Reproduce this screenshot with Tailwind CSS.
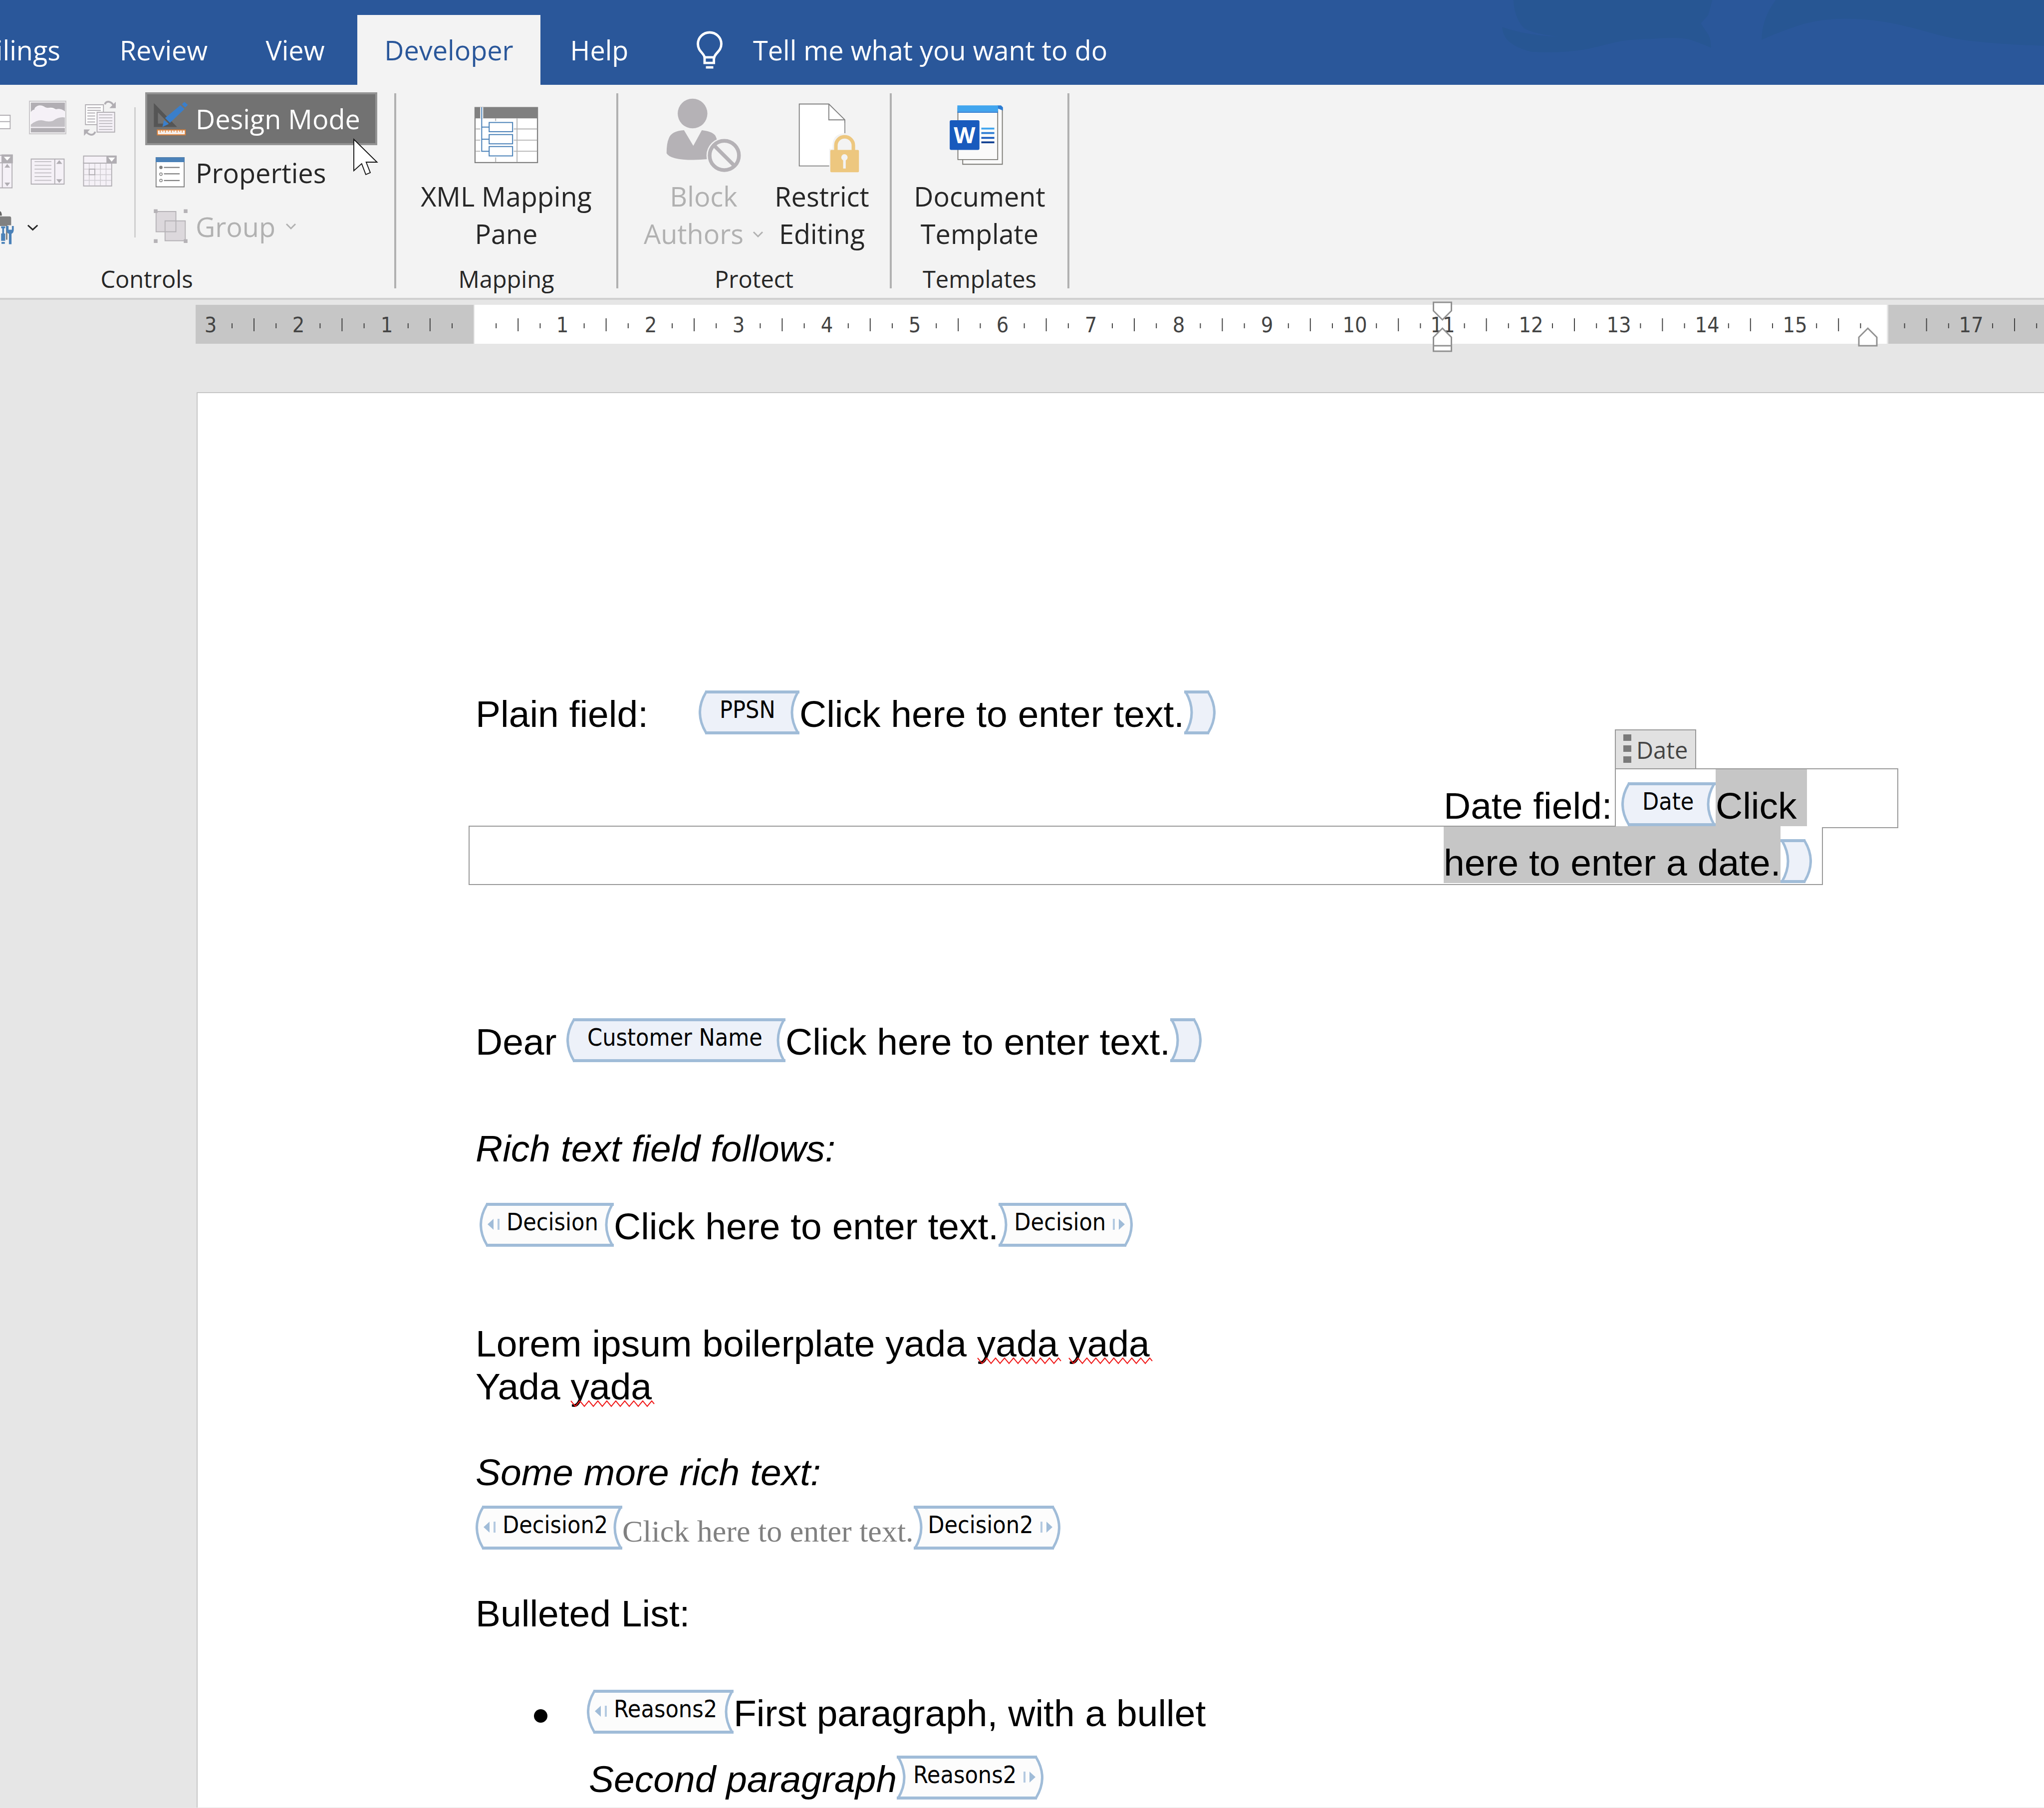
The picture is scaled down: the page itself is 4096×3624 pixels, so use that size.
<!DOCTYPE html>
<html lang="en">
<head>
<meta charset="utf-8">
<title>Word - Developer tab</title>
<script src="https://cdn.jsdelivr.net/npm/@tailwindcss/browser@4"></script>
</head>
<body class="min-h-screen overflow-x-hidden bg-[#e6e6e6] font-['Open_Sans','Noto_Sans',sans-serif] text-[54px] text-[#262626]">

<!-- Shared shapes for the content-control tags -->
<svg class="hidden" aria-hidden="true">
  <symbol id="bulge" viewBox="0 0 16 88"><path d="M16 3H15Q-10 44 15 85H16" fill="currentColor" stroke="#a0bcd8" stroke-width="5"/><path d="M13 3H16M13 85H16" stroke="#a0bcd8" stroke-width="6"/></symbol>
  <symbol id="notch" viewBox="0 0 18 88"><path d="M0 3H15Q-9 44 15 85H0" fill="currentColor" stroke="#a0bcd8" stroke-width="5"/><path d="M0 3H18M0 85H18" stroke="#a0bcd8" stroke-width="6"/></symbol>
  <symbol id="arrow" viewBox="0 0 26 24"><path d="M0 12L12 1V23Z" fill="#a0bcd8"/><path d="M22 1V23" stroke="#b4cae1" stroke-width="4"/></symbol>
  <symbol id="chevron" viewBox="0 0 22 14"><path d="M2 2L11 11L20 2" fill="none" stroke="currentColor" stroke-width="3"/></symbol>
</svg>

<header class="relative flex h-[170px] items-end overflow-hidden bg-[#2a579a] text-white">
  <svg class="absolute top-0 right-0 h-[170px] w-[1409px]" viewBox="3600 0 1887 228" preserveAspectRatio="none" aria-hidden="true">
    <path fill="#275693" d="M4063 0Q4066 50 4092 76Q4120 92 4190 99Q4100 96 4033 73Q4034 120 4111 139Q4190 144 4260 132C4330 118 4340 106 4430 105Q4510 98 4538 107Q4560 114 4593 128Q4594 100 4580 84L4566 63L4586 40L4597 0Z"/>
    <path fill="#275693" d="M4767 0Q4730 50 4729 107Q4780 84 4830 68C4900 46 4990 44 5092 65C5180 84 5200 98 5290 110Q5380 120 5487 123V0Z"/>
  </svg>
  <nav class="relative flex h-[140px] leading-[140px] whitespace-nowrap">
    <a href="#" class="flex w-[183px] justify-end pr-[62px]">Mailings</a>
    <a href="#" class="w-[290px] text-center">Review</a>
    <a href="#" class="w-[243px] pr-[6px] text-center">View</a>
    <a href="#" class="w-[367px] bg-[#f3f3f3] text-center text-[#2a579a]" aria-current="page">Developer</a>
    <a href="#" class="w-[236px] text-center">Help</a>
  </nav>
  <label class="relative ml-[73px] flex h-[140px] items-center gap-[57px]">
    <svg class="h-[82px] w-[60px]" viewBox="1865 80 80 110" fill="none" stroke="#fff" stroke-width="6.5" aria-hidden="true">
      <path d="M1892 158C1892 144 1873.500 140 1873.500 119A31.500 31 0 0 1 1936.500 119C1936.500 140 1917 144 1917 158"/><path d="M1891.500 155V170H1916.500V155Z"/><path d="M1895 182H1915"/>
    </svg>
    <input type="text" aria-label="Tell me what you want to do" placeholder="Tell me what you want to do" class="h-[100px] w-[800px] bg-transparent placeholder:text-white placeholder:opacity-100">
  </label>
</header>

<section class="flex h-[431px] items-start overflow-hidden border-b-4 border-[#d0d0d0] bg-[#f3f3f3]" aria-label="Ribbon">
  <!-- Controls -->
  <div class="relative flex h-[427px] w-[790px] shrink-0 flex-col justify-between pt-[15px] pb-[6px]">
    <div class="flex items-start">
      <div class="grid w-[269px] grid-cols-[43px_105px_105px] gap-y-[2px]">
        <button class="flex h-[106px] items-center" aria-label="Check box control"><svg class="h-[75px] w-[43px]" viewBox="0 269 57 100" fill="#fff" stroke="#b1aeb3" stroke-width="2.500"><path d="M-5 309H27V345H-5ZM-5 326H27"/></svg></button>
        <button class="flex items-center justify-center" aria-label="Picture control"><svg class="size-[75px]" viewBox="78 269 100 100"><path d="M79.500 271.500H176.500V358.500H79.500Z" fill="#fff" stroke="#cbc9cc" stroke-width="3"/><path d="M83 275H174V299Q164 290 150 293Q140 287 132 289Q122 290 119 286Q105 279 97 287Q92 290 93 294Q86 295 83 301Z" fill="#b1aeb3"/><path d="M83 301Q88 294 94 294Q92 287 101 285Q112 282 119 287Q132 291 150 293Q164 290 174 299V343H83Z" fill="#f5f1f7"/><path d="M83 334Q100 320 116 323Q130 328 142 324Q158 312 174 315V340H83Z" fill="#c2bfc4"/><path d="M83 343H174V355H83Z" fill="#b1aeb3"/></svg></button>
        <button class="flex items-center justify-center" aria-label="Building block gallery"><svg class="size-[75px]" viewBox="218 267 100 100" fill="none" stroke="#b1aeb3" stroke-width="2.500"><path d="M229 279H277V332H229Z" fill="#fff"/><path d="M234 287H270M234 294H270M234 301H255M234 309H255M234 317H255M234 325H255" /><path d="M260 299H307V352H260Z" fill="#f5f1f7"/><path d="M265 306H301M265 314H301M265 322H301M265 329H301M265 337H301M265 345H301" stroke-width="2"/><path d="M281 278Q283 270 292 271Q301 273 304 282" stroke-width="5"/><path d="M310 271V288H293Z" fill="#b1aeb3" stroke="none"/><path d="M255 351Q252 360 243 359Q233 356 231 350" stroke-width="5"/><path d="M225 362V345H241Z" fill="#b1aeb3" stroke="none"/></svg></button>
        <button class="flex h-[106px] items-center" aria-label="Combo box control"><svg class="h-[75px] w-[43px]" viewBox="0 414 57 100" fill="#f5f1f7" stroke="#b1aeb3" stroke-width="2.500"><path d="M-5 417H32V437H-5ZM-5 437H32V504H-5ZM6 437V504"/><path d="M5 416H33V437H5Z" fill="#b1aeb3"/><path d="M10 421H28L19 431Z" fill="#fff" stroke="none"/><path d="M12 450H27L19 440ZM12 490H27L19 500Z" fill="#b1aeb3" stroke="none"/></svg></button>
        <button class="flex items-center justify-center" aria-label="Drop-down list control"><svg class="size-[75px]" viewBox="78 414 100 100" fill="#f5f1f7" stroke="#b1aeb3" stroke-width="2.500"><path d="M84 427H172V494H84ZM147 427V494"/><path d="M93 434H138M93 444H138M93 454H138M93 464H138M93 474H138M93 484H138" stroke="#c5c2c7"/><path d="M151 440H167L159 430ZM151 481H167L159 491Z" fill="#b1aeb3" stroke="none"/></svg></button>
        <button class="flex items-center justify-center" aria-label="Date picker control"><svg class="size-[75px]" viewBox="218 414 100 100" fill="#f5f1f7" stroke="#b1aeb3" stroke-width="2.500"><path d="M224 437H299V499H224Z"/><path d="M239 439V498M254 439V498M269 439V498M284 439V498M225 454H298M225 469H298M225 484H298" stroke="#cfccd1" stroke-width="2"/><path d="M239 454H254V469H239Z"/><path d="M224 419H311V438H224Z"/><path d="M285 418H312V439H285Z" fill="#b1aeb3" stroke="none"/><path d="M290 423H308L299 434Z" fill="#fff" stroke="none"/></svg></button>
        <button class="col-span-2 flex h-[106px] items-center" aria-label="Legacy tools"><svg class="h-[75px] w-[82px]" viewBox="0 558 110 100"><path d="M0 566Q5 568 5 578H0Z" fill="#666"/><path d="M0 580H26Q30 580 30 585V604H20V643H16V606H0Z" fill="#808080"/><path d="M3 607H14V612H11V626H14V646H3V626H6V612H3ZM4 649H13V654H4Z" fill="#4a81b8"/><path d="M17 606V616Q17 624 24 627V655H31V627Q37 624 37 616V606H32V616H23V606Z" fill="#4a81b8"/><path d="M75 604L88 616L101 604" fill="none" stroke="#262626" stroke-width="4"/></svg></button>
      </div>
      <div class="mt-[30px] h-[261px] w-[3px] bg-[#d0d0d0]"></div>
      <div class="ml-[19px] flex w-[465px] flex-col gap-[2px]">
        <button class="flex h-[106px] items-center gap-[14px] border-4 border-[#939393] bg-[#727272] pl-[11px] whitespace-nowrap text-white" aria-pressed="true"><svg class="size-[72px]" viewBox="410 267 96 96"><path fill="#555" fill-rule="evenodd" d="M413 273V337H475ZM424 298V328H453Z"/><path fill="#3a7fcb" d="M443 313L484 279L495 289L456 326ZM440 319L453 329L436 337ZM488 276L495 270L504 278L497 285Z"/><path d="M422.500 345H497V358H422.500Z" fill="#f5eeea" stroke="#dd7f35" stroke-width="2.500"/><path d="M430 346V352M437 346V350M444 346V352M452 346V350M460 346V352M467 346V350M475 346V352M482 346V350M489 346V352" stroke="#dd7f35" stroke-width="2"/></svg>Design Mode</button>
        <button class="flex h-[106px] items-center gap-[14px] pl-[15px] whitespace-nowrap"><svg class="size-[72px]" viewBox="410 413 96 96"><path d="M419 421H494V499H419Z" fill="#fff" stroke="#808080" stroke-width="2.500"/><path d="M418 420H495V433H418Z" fill="#4a81b8"/><path d="M440 447H482M440 464H482M440 482H482" stroke="#808080" stroke-width="3"/><circle cx="432" cy="447" r="4.500" fill="#808080"/><circle cx="432" cy="465" r="3.500" fill="none" stroke="#808080" stroke-width="2"/><circle cx="432" cy="482" r="3.500" fill="none" stroke="#808080" stroke-width="2"/></svg>Properties</button>
        <button class="flex h-[106px] items-center gap-[14px] pl-[15px] whitespace-nowrap text-[#b1b1b1]" aria-disabled="true"><svg class="size-[72px]" viewBox="410 558 96 96"><path d="M419 566H472V620H419Z" fill="#dcd8dc"/><path d="M443 591H497V644H443Z" fill="#dcd8dc"/><path d="M419 566H472V620H419ZM443 591H497V644H443Z" fill="none" stroke="#b5b2b6" stroke-width="2.500"/><path d="M413 560H423V570H413ZM493 560H503V570H493ZM413 640H423V650H413ZM493 640H503V650H493Z" fill="#b5b2b6"/></svg>Group<svg class="ml-[6px] h-[14px] w-[22px]"><use href="#chevron"/></svg></button>
      </div>
    </div>
    <div class="w-[588px] text-center text-[47px] leading-[64px]">Controls</div>
    <svg class="absolute top-[107px] left-[706px] h-[75px] w-[54px]" viewBox="946 370 72 100" aria-hidden="true"><path d="M950 373V457L971 438L982 467L994 462L983 434H1012Z" fill="#fff" stroke="#111" stroke-width="2.500"/></svg>
  </div>
  <div class="mt-[17px] h-[391px] w-[4px] shrink-0 bg-[#b1b1b1]"></div>

  <!-- Mapping -->
  <div class="flex h-[427px] w-[441px] shrink-0 flex-col items-center justify-between pt-[27px] pb-[6px]">
    <button class="flex flex-col items-center gap-[10px] leading-[75px]">
      <svg class="size-[149px]" viewBox="1260 264 200 200"><path d="M1276 289H1444V437H1276Z" fill="#fff" stroke="#808080" stroke-width="3"/><path d="M1275 288H1445V318H1275Z" fill="#808080"/><path d="M1290 288H1298V318H1290Z" fill="#fff"/><path d="M1331.500 318V325M1331.500 423V436M1389 318V436M1278 346.500H1290M1278 376.500H1290M1278 406.500H1290M1380 346.500H1443M1380 376.500H1443M1380 406.500H1443" stroke="#b1b1b1" stroke-width="2.500"/><path d="M1294 288V406.500H1314M1294 341.500H1314M1294 374H1314M1314 329H1377V354H1314ZM1314 361.500H1377V386.500H1314ZM1314 394H1377V419H1314Z" fill="none" stroke="#4a81b8" stroke-width="2.700"/></svg>
      <span>XML Mapping<br>Pane</span>
    </button>
    <div class="text-[47px] leading-[64px]">Mapping</div>
  </div>
  <div class="mt-[17px] h-[391px] w-[4px] shrink-0 bg-[#b1b1b1]"></div>

  <!-- Protect -->
  <div class="flex h-[427px] w-[544px] shrink-0 flex-col items-center justify-between pt-[27px] pb-[6px]">
    <div class="flex w-full pl-[32px]">
      <button class="flex w-[278px] flex-col items-center gap-[10px] leading-[75px] text-[#b1b1b1]" aria-disabled="true">
        <svg class="h-[149px] w-[151px]" viewBox="1789 264 203 200"><circle cx="1860" cy="305" r="40" fill="#b5b2b6"/><path d="M1837 350L1862 392L1885 350Q1912 353 1921 364Q1926 372 1928 390L1900 428Q1880 430 1862 430Q1800 430 1790 412Q1790 385 1796 372Q1803 352 1837 350Z" fill="#b5b2b6"/><circle cx="1945.500" cy="418" r="48" fill="#f3f3f3"/><circle cx="1945.500" cy="418" r="39.500" fill="none" stroke="#b5b2b6" stroke-width="10"/><path d="M1918 391L1973 446" stroke="#b5b2b6" stroke-width="10"/></svg>
        <span class="whitespace-nowrap">Block<br>Authors<svg class="mb-[10px] ml-[18px] inline h-[14px] w-[22px]"><use href="#chevron"/></svg></span>
      </button>
      <button class="flex w-[196px] flex-col items-center gap-[10px] leading-[75px]">
        <svg class="size-[149px]" viewBox="2106 264 200 200"><path d="M2144.500 279.500H2224L2267 322V446H2144.500Z" fill="#fff" stroke="#808080" stroke-width="2.500"/><path d="M2224 279V322H2267" fill="none" stroke="#808080" stroke-width="2.500"/><path d="M2225 450V400H2234V388Q2236 359 2266 358Q2297 359 2299 388V400H2310V450Z" fill="#f3f3f3"/><path d="M2224 450V400H2233V388Q2238 359 2266 358V330H2160V440H2224Z" fill="#fff"/><path d="M2243 406V391A23.500 23.500 0 0 1 2290 391V406" fill="none" stroke="#edc77f" stroke-width="9.500"/><rect x="2228" y="403" width="77" height="60" rx="3" fill="#edc77f"/><circle cx="2266" cy="423" r="8.500" fill="#f3f3f3"/><path d="M2266 425V453" stroke="#f3f3f3" stroke-width="7"/></svg>
        <span>Restrict<br>Editing</span>
      </button>
    </div>
    <div class="text-[47px] leading-[64px]">Protect</div>
  </div>
  <div class="mt-[17px] h-[391px] w-[4px] shrink-0 bg-[#b1b1b1]"></div>

  <!-- Templates -->
  <div class="flex h-[427px] w-[352px] shrink-0 flex-col items-center justify-between pt-[27px] pb-[6px]">
    <button class="flex flex-col items-center gap-[10px] leading-[75px]">
      <svg class="size-[149px]" viewBox="2531 264 200 200"><path d="M2585 290H2691.500V441.500H2585Z" fill="#fafafa" stroke="#7a7974" stroke-width="2.500"/><path d="M2678 283H2688L2693 288V297L2680 292Z" fill="#2b7cd3"/><path d="M2572 290H2679V429H2572Z" fill="#fafafa" stroke="#7a7974" stroke-width="2.500"/><path d="M2570.500 283H2680V300H2570.500Z" fill="#41a5ee"/><path d="M2570.500 300H2680V303H2570.500Z" fill="#2b7cd3"/><rect x="2550" y="323" width="80" height="80" rx="4" fill="#185abd"/><text x="2590" y="385" text-anchor="middle" font-size="60" font-weight="700" fill="#fff">W</text><path d="M2635 345.500H2670" stroke="#41a5ee" stroke-width="5"/><path d="M2635 357.500H2670" stroke="#2b7cd3" stroke-width="5"/><path d="M2635 370.500H2670" stroke="#185abd" stroke-width="5"/><path d="M2635 382.500H2670" stroke="#103f91" stroke-width="5"/></svg>
      <span>Document<br>Template</span>
    </button>
    <div class="text-[47px] leading-[64px]">Templates</div>
  </div>
  <div class="mt-[17px] h-[391px] w-[4px] shrink-0 bg-[#b1b1b1]"></div>
</section>

<!-- Horizontal ruler, 176.4px per centimetre -->
<div class="mt-[10px] ml-[392px] h-[78px]">
  <svg class="h-[78px] w-full overflow-visible font-['DejaVu_Sans_Condensed','DejaVu_Sans',sans-serif] text-[43px]" aria-label="Ruler">
    <rect width="557" height="78" fill="#c6c6c6"/><rect x="559" width="2830" height="78" fill="#fff"/><rect x="3392" width="312" height="78" fill="#c6c6c6"/>
    <g stroke="#444">
      <path d="M116 40H3704" stroke-width="26" stroke-dasharray="2 174.4"/>
      <path d="M72 42H3704" stroke-width="10" stroke-dasharray="2 86.2"/>
    </g>
    <g fill="#444" text-anchor="middle">
      <text x="30" y="55">3</text><text x="206" y="55">2</text><text x="383" y="55">1</text><text x="735" y="55">1</text><text x="912" y="55">2</text><text x="1088" y="55">3</text><text x="1265" y="55">4</text><text x="1441" y="55">5</text><text x="1617" y="55">6</text><text x="1794" y="55">7</text><text x="1970" y="55">8</text><text x="2147" y="55">9</text><text x="2323" y="55">10</text><text x="2499" y="55">11</text><text x="2676" y="55">12</text><text x="2852" y="55">13</text><text x="3029" y="55">14</text><text x="3205" y="55">15</text><text x="3558" y="55">17</text>
    </g>
    <g fill="#fff" stroke="#919191" stroke-width="3">
      <path d="M2480.500 -5H2516.500V12L2498.500 30L2480.500 12Z"/>
      <path d="M2498.500 47L2516.500 65V93H2480.500V65Z"/><path d="M2480.500 82H2516.500"/>
      <path d="M3351 47L3369 65V82H3333V65Z"/>
    </g>
  </svg>
</div>

<!-- Document page -->
<main class="mt-[97px] ml-[394px] border-t-2 border-l-2 border-[#c6c6c6] bg-white pt-[596px] pb-[16px] pl-[557px] font-['Liberation_Sans',Arial,sans-serif] text-[75px] leading-[94px] whitespace-nowrap text-black">
  <div class="flex h-[88px]"><span class="w-[447px]">Plain field:</span><span class="flex w-[202px] font-['DejaVu_Sans_Condensed','DejaVu_Sans',sans-serif] text-[48px] leading-[64px]"><svg class="h-[88px] w-[16px] text-[#edf1f9]"><use href="#bulge"/></svg><span class="flex-1 border-y-6 border-[#a0bcd8] bg-[#edf1f9] pl-[26px]">PPSN</span><svg class="h-[88px] w-[18px] text-[#edf1f9]"><use href="#notch"/></svg></span><span>Click here to enter text.</span><span class="flex w-[63px]"><svg class="h-[88px] w-[18px] -scale-x-100 text-[#edf1f9]"><use href="#notch"/></svg><span class="flex-1 border-y-6 border-[#a0bcd8] bg-[#edf1f9]"></span><svg class="h-[88px] w-[16px] -scale-x-100 text-[#edf1f9]"><use href="#bulge"/></svg></span></div>

  <div class="relative mt-[96px] flex flex-col gap-[26px]">
    <div class="ml-[1940px] flex h-[88px]"><span class="w-[356px]">Date field:</span><span class="flex w-[189px] font-['DejaVu_Sans_Condensed','DejaVu_Sans',sans-serif] text-[48px] leading-[64px]"><svg class="h-[88px] w-[16px] text-[#edf1f9]"><use href="#bulge"/></svg><span class="flex-1 border-y-6 border-[#a0bcd8] bg-[#edf1f9] pl-[26px]">Date</span><svg class="h-[88px] w-[18px] text-[#edf1f9]"><use href="#notch"/></svg></span><span class="-mt-[26px] h-[114px] bg-[#c6c6c6] pt-[26px] whitespace-pre">Click </span></div>
    <div class="ml-[1940px] flex h-[88px]"><span class="-mt-[26px] h-[114px] bg-[#c6c6c6] pt-[26px]">here to enter a date.</span><span class="flex w-[63px]"><svg class="h-[88px] w-[18px] -scale-x-100 text-[#edf1f9]"><use href="#notch"/></svg><span class="flex-1 border-y-6 border-[#a0bcd8] bg-[#edf1f9]"></span><svg class="h-[88px] w-[16px] -scale-x-100 text-[#edf1f9]"><use href="#bulge"/></svg></span></div>
    <!-- Outline and handle of the selected control -->
    <svg class="absolute -top-[28px] -left-[14px] h-[236px] w-[2866px]" fill="none" stroke="#999" stroke-width="2" aria-hidden="true"><path d="M2298 1H2864V119H2713V233H1V116H2298Z"/></svg>
    <button class="absolute -top-[106px] left-[2283px] flex h-[80px] w-[163px] gap-[10px] border-2 border-[#999] bg-[#e1e1e1] pl-[15px] font-['Open_Sans','Noto_Sans',sans-serif] text-[47px] leading-[78px] text-[#444]"><span class="flex w-[16px] flex-col gap-[9px] pt-[8px]"><span class="h-[13px] bg-[#7a7a7a]"></span><span class="h-[13px] bg-[#7a7a7a]"></span><span class="h-[13px] bg-[#7a7a7a]"></span></span>Date</button>
  </div>

  <div class="mt-[271px] flex h-[88px]"><span class="w-[182px]">Dear</span><span class="flex w-[439px] font-['DejaVu_Sans_Condensed','DejaVu_Sans',sans-serif] text-[48px] leading-[64px]"><svg class="h-[88px] w-[16px] text-[#edf1f9]"><use href="#bulge"/></svg><span class="flex-1 border-y-6 border-[#a0bcd8] bg-[#edf1f9] pl-[26px]">Customer Name</span><svg class="h-[88px] w-[18px] text-[#edf1f9]"><use href="#notch"/></svg></span><span>Click here to enter text.</span><span class="flex w-[63px]"><svg class="h-[88px] w-[18px] -scale-x-100 text-[#edf1f9]"><use href="#notch"/></svg><span class="flex-1 border-y-6 border-[#a0bcd8] bg-[#edf1f9]"></span><svg class="h-[88px] w-[16px] -scale-x-100 text-[#edf1f9]"><use href="#bulge"/></svg></span></div>

  <p class="mt-[126px] h-[88px] italic">Rich text field follows:</p>

  <div class="mt-[68px] ml-[8px] flex h-[88px]"><span class="flex w-[269px] font-['DejaVu_Sans_Condensed','DejaVu_Sans',sans-serif] text-[48px] leading-[64px]"><svg class="h-[88px] w-[16px] text-[#fcfcfc]"><use href="#bulge"/></svg><span class="flex flex-1 gap-[12px] border-y-6 border-[#a0bcd8] bg-[#fcfcfc]"><svg class="mt-[25px] h-[24px] w-[26px]"><use href="#arrow"/></svg>Decision</span><svg class="h-[88px] w-[18px] text-[#fcfcfc]"><use href="#notch"/></svg></span><span>Click here to enter text.</span><span class="flex w-[269px] font-['DejaVu_Sans_Condensed','DejaVu_Sans',sans-serif] text-[48px] leading-[64px]"><svg class="h-[88px] w-[18px] -scale-x-100 text-[#fcfcfc]"><use href="#notch"/></svg><span class="flex flex-1 justify-end gap-[12px] border-y-6 border-[#a0bcd8] bg-[#fcfcfc]">Decision<svg class="mt-[25px] h-[24px] w-[26px] -scale-x-100"><use href="#arrow"/></svg></span><svg class="h-[88px] w-[16px] -scale-x-100 text-[#fcfcfc]"><use href="#bulge"/></svg></span></div>

  <p class="mt-[147px] h-[86px]">Lorem ipsum boilerplate yada <span class="relative">yada<svg class="absolute top-[70px] left-0 h-[14px] w-[170px]" aria-hidden="true"><path d="M1 1L10 12L19 1L28 12L37 1L46 12L55 1L64 12L73 1L82 12L91 1L100 12L109 1L118 12L127 1L136 12L145 1L154 12L163 1L168 7" fill="none" stroke="#f01818" stroke-width="2"/></svg></span> <span class="relative">yada<svg class="absolute top-[70px] left-0 h-[14px] w-[170px]" aria-hidden="true"><path d="M1 1L10 12L19 1L28 12L37 1L46 12L55 1L64 12L73 1L82 12L91 1L100 12L109 1L118 12L127 1L136 12L145 1L154 12L163 1L168 7" fill="none" stroke="#f01818" stroke-width="2"/></svg></span></p>
  <p class="h-[88px]">Yada <span class="relative">yada<svg class="absolute top-[70px] left-0 h-[14px] w-[170px]" aria-hidden="true"><path d="M1 1L10 12L19 1L28 12L37 1L46 12L55 1L64 12L73 1L82 12L91 1L100 12L109 1L118 12L127 1L136 12L145 1L154 12L163 1L168 7" fill="none" stroke="#f01818" stroke-width="2"/></svg></span></p>

  <p class="mt-[84px] h-[88px] italic">Some more rich text:</p>

  <div class="mt-[26px] flex h-[88px]"><span class="flex w-[294px] font-['DejaVu_Sans_Condensed','DejaVu_Sans',sans-serif] text-[48px] leading-[64px]"><svg class="h-[88px] w-[16px] text-[#fcfcfc]"><use href="#bulge"/></svg><span class="flex flex-1 gap-[12px] border-y-6 border-[#a0bcd8] bg-[#fcfcfc]"><svg class="mt-[25px] h-[24px] w-[26px]"><use href="#arrow"/></svg>Decision2</span><svg class="h-[88px] w-[18px] text-[#fcfcfc]"><use href="#notch"/></svg></span><span class="font-['Liberation_Serif','Times_New_Roman',serif] text-[62px] leading-[102px] text-[#808080]">Click here to enter text.</span><span class="flex w-[294px] font-['DejaVu_Sans_Condensed','DejaVu_Sans',sans-serif] text-[48px] leading-[64px]"><svg class="h-[88px] w-[18px] -scale-x-100 text-[#fcfcfc]"><use href="#notch"/></svg><span class="flex flex-1 justify-end gap-[12px] border-y-6 border-[#a0bcd8] bg-[#fcfcfc]">Decision2<svg class="mt-[25px] h-[24px] w-[26px] -scale-x-100"><use href="#arrow"/></svg></span><svg class="h-[88px] w-[16px] -scale-x-100 text-[#fcfcfc]"><use href="#bulge"/></svg></span></div>

  <p class="mt-[81px] h-[88px]">Bulleted List:</p>

  <ul class="mt-[112px]"><li><div class="flex h-[88px] pl-[117px]"><span class="mt-[39px] mr-[79px] size-[27px] rounded-full bg-black"></span><span class="flex w-[294px] font-['DejaVu_Sans_Condensed','DejaVu_Sans',sans-serif] text-[48px] leading-[64px]"><svg class="h-[88px] w-[16px] text-[#fcfcfc]"><use href="#bulge"/></svg><span class="flex flex-1 gap-[12px] border-y-6 border-[#a0bcd8] bg-[#fcfcfc]"><svg class="mt-[25px] h-[24px] w-[26px]"><use href="#arrow"/></svg>Reasons2</span><svg class="h-[88px] w-[18px] text-[#fcfcfc]"><use href="#notch"/></svg></span><span>First paragraph, with a bullet</span></div><div class="mt-[44px] flex h-[88px] pl-[227px]"><span class="italic">Second paragraph</span><span class="flex w-[294px] font-['DejaVu_Sans_Condensed','DejaVu_Sans',sans-serif] text-[48px] leading-[64px]"><svg class="h-[88px] w-[18px] -scale-x-100 text-[#fcfcfc]"><use href="#notch"/></svg><span class="flex flex-1 justify-end gap-[12px] border-y-6 border-[#a0bcd8] bg-[#fcfcfc]">Reasons2<svg class="mt-[25px] h-[24px] w-[26px] -scale-x-100"><use href="#arrow"/></svg></span><svg class="h-[88px] w-[16px] -scale-x-100 text-[#fcfcfc]"><use href="#bulge"/></svg></span></div></li></ul>
</main>
</body>
</html>
